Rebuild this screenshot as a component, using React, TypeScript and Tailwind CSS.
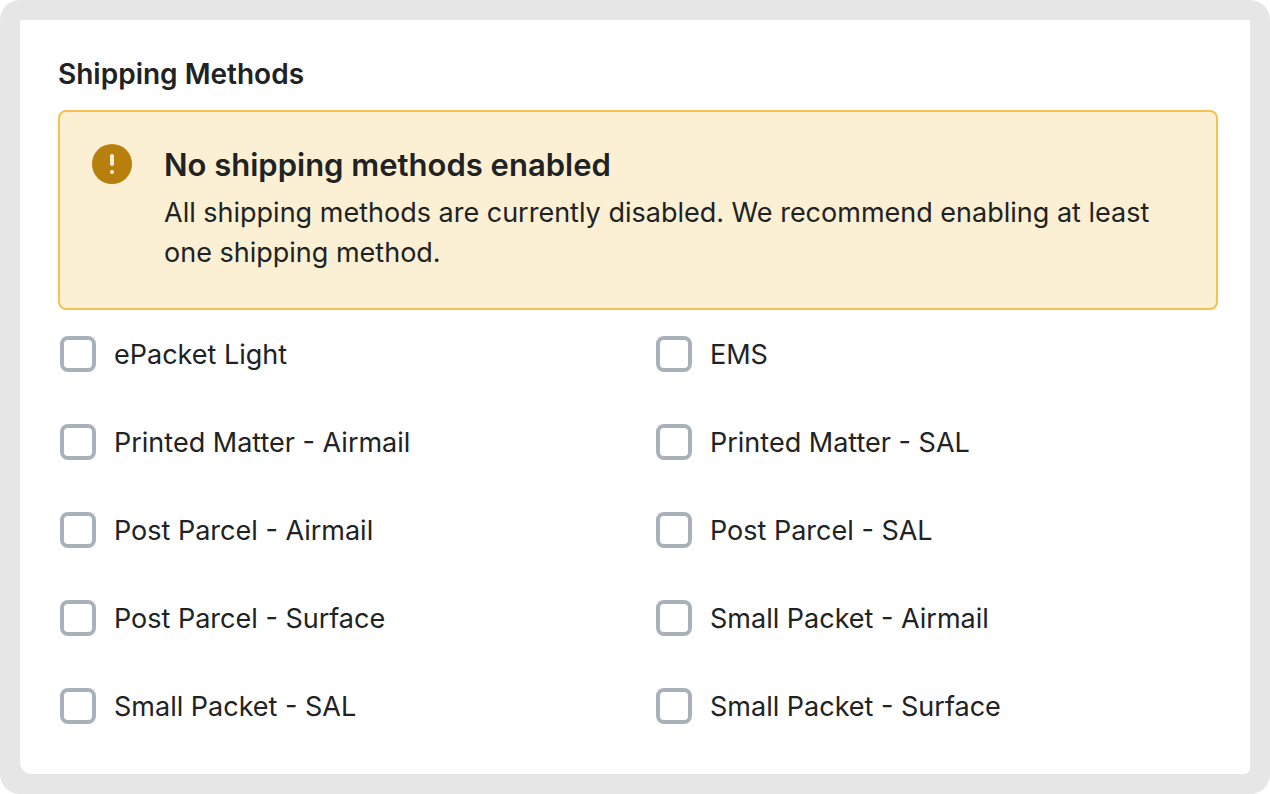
import React from "react";

const methods: string[] = [
  "ePacket Light",
  "EMS",
  "Printed Matter - Airmail",
  "Printed Matter - SAL",
  "Post Parcel - Airmail",
  "Post Parcel - SAL",
  "Post Parcel - Surface",
  "Small Packet - Airmail",
  "Small Packet - SAL",
  "Small Packet - Surface",
];

function WarningIcon() {
  return (
    <svg viewBox="0 0 40 40" className="size-10 shrink-0" aria-hidden="true">
      <circle cx="20" cy="20" r="20" fill="#b77f0b" />
      <rect x="18" y="10" width="4" height="12" rx="2" fill="#fcf0d4" />
      <circle cx="20" cy="28" r="2" fill="#fcf0d4" />
    </svg>
  );
}

function Banner() {
  return (
    <div
      role="status"
      className="flex gap-8 rounded-lg border-2 border-[#f5c252] bg-[#fcf0d4] px-8 pt-8 pb-[35px]"
    >
      <WarningIcon />
      <div className="min-w-0 pt-px">
        <h3 className="text-[31px] leading-10 font-semibold">No shipping methods enabled</h3>
        <p className="mt-2 text-[27px] leading-10">
          All shipping methods are currently disabled. We recommend enabling at least one shipping
          method.
        </p>
      </div>
    </div>
  );
}

function MethodOption({ id, label }: { id: string; label: string }) {
  return (
    <div className="flex h-9 items-center">
      <input
        id={id}
        type="checkbox"
        className="size-9 shrink-0 appearance-none rounded-lg border-4 border-[#abb1bb] bg-white checked:bg-[#abb1bb]"
      />
      <label htmlFor={id} className="pt-0.5 pl-[18px] text-[27px] leading-9">
        {label}
      </label>
    </div>
  );
}

export default function App() {
  return (
    <main className="rounded-[20px] bg-[#e6e6e6] p-5 font-['Inter',sans-serif] text-[#202223]">
      <section className="rounded-tl-xs rounded-br-md rounded-bl-xl bg-white pt-[34px] pr-8 pb-[50px] pl-[38px]">
        <h2 className="mb-4 text-[28px] leading-10 font-semibold">Shipping Methods</h2>
        <Banner />
        <div className="mt-[26px] grid grid-cols-2 gap-x-[34px] gap-y-[52px] pl-0.5">
          {methods.map((label, index) => (
            <MethodOption key={label} id={`method-${index}`} label={label} />
          ))}
        </div>
      </section>
    </main>
  );
}
